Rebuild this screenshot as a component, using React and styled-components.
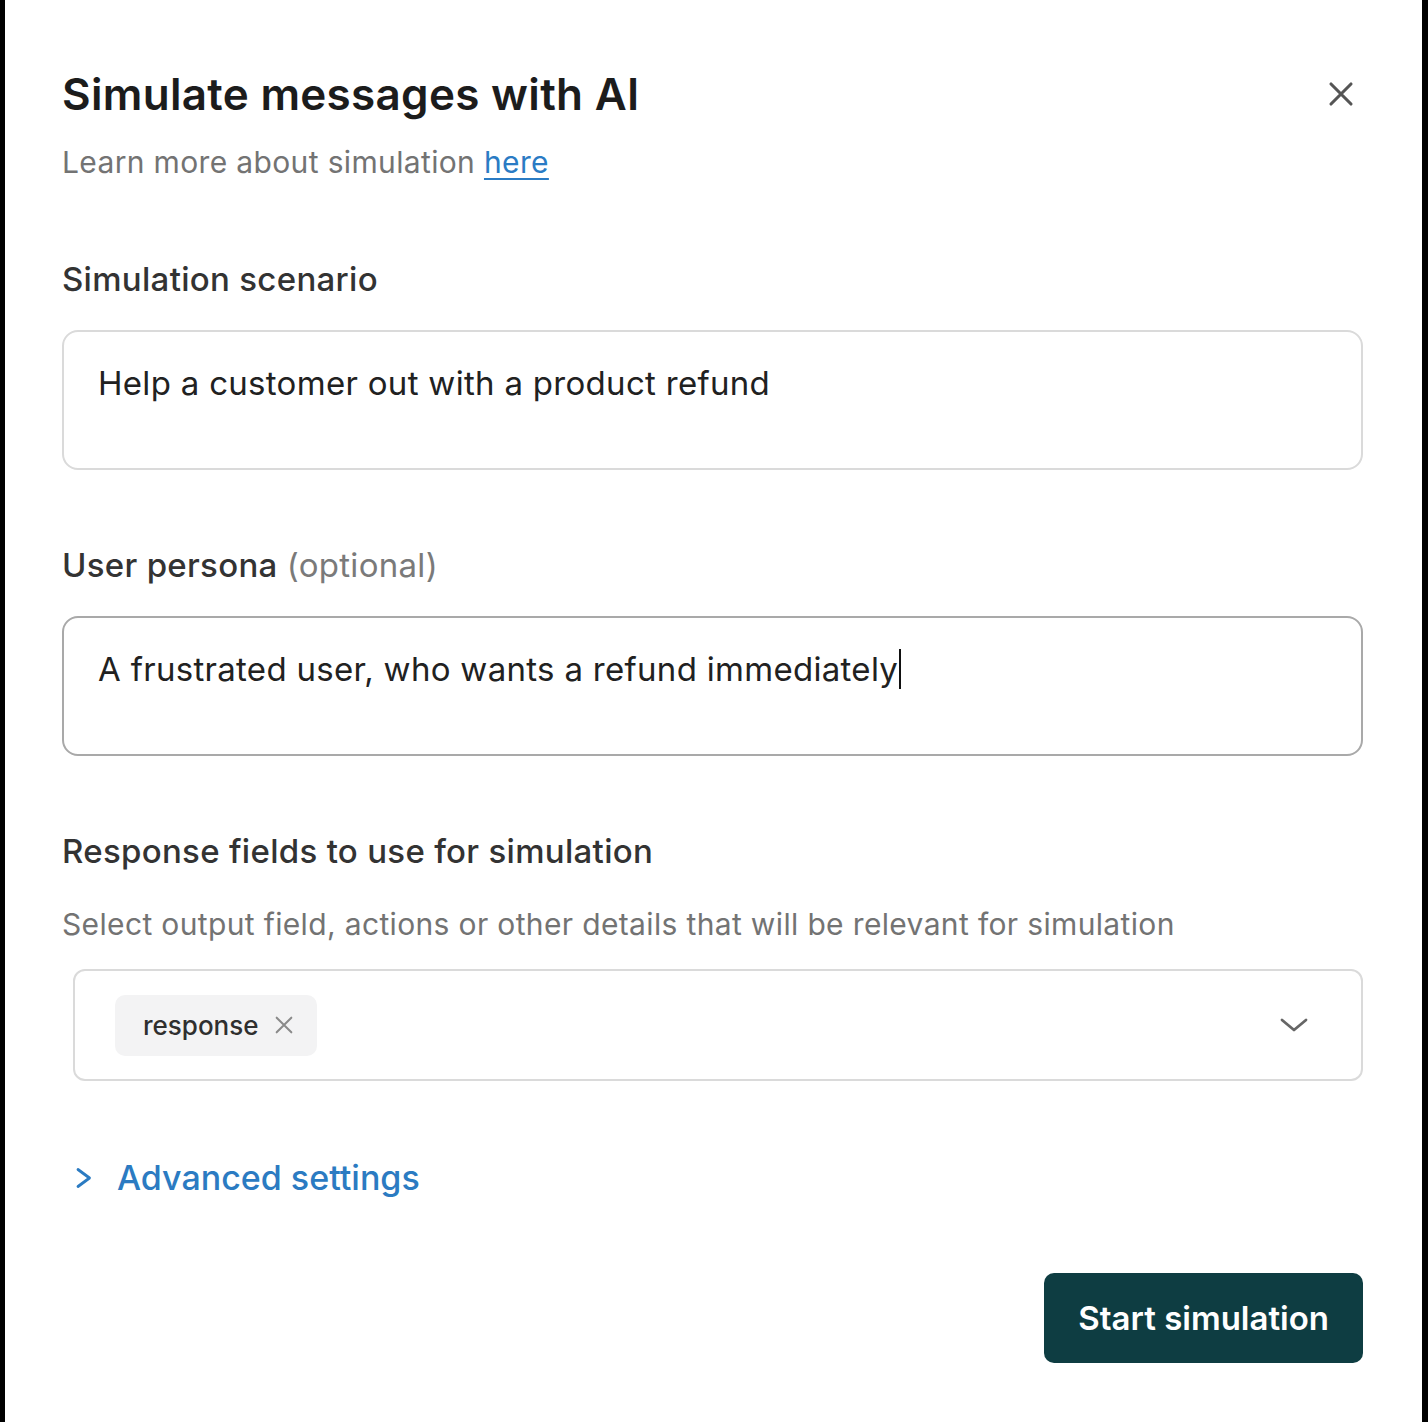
import styled, { createGlobalStyle } from "styled-components";

const GlobalStyle = createGlobalStyle`
  html, body {
    margin: 0;
    padding: 0;
    background: #000;
  }
  body {
    font-family: Inter, "Noto Sans", sans-serif;
    -webkit-font-smoothing: antialiased;
  }
`;

const Frame = styled.div`
  width: 1428px;
  height: 1422px;
  box-sizing: border-box;
  padding: 0 6px 0 5px;
  background: #000;
`;

const Modal = styled.div`
  height: 100%;
  background: #fff;
  box-sizing: border-box;
  padding: 66px 59px 0 57px;
  display: flex;
  flex-direction: column;
`;

const Header = styled.div`
  display: flex;
  justify-content: space-between;
  align-items: flex-start;
`;

const Title = styled.h1`
  margin: 0;
  font-size: 44px;
  line-height: 56px;
  font-weight: 600;
  color: #1c1c1c;
  letter-spacing: 0.3px;
`;

const CloseBtn = styled.button`
  border: none;
  background: none;
  padding: 0;
  margin-top: 13px;
  margin-right: 7px;
  width: 30px;
  height: 30px;
  display: flex;
  align-items: center;
  justify-content: center;
  cursor: pointer;
`;

const Subtitle = styled.p`
  margin: 20px 0 0;
  font-size: 30px;
  line-height: 40px;
  letter-spacing: 0.35px;
  color: #737373;
`;

const Link = styled.a`
  color: #2a7bc4;
  text-decoration: underline;
  text-underline-offset: 5px;
  text-decoration-thickness: 2px;
`;

const Section = styled.div`
  margin-top: ${(p) => p.$top}px;
  display: flex;
  flex-direction: column;
`;

const Label = styled.div`
  font-size: 33px;
  line-height: 40px;
  letter-spacing: 0.3px;
  font-weight: 500;
  color: #333;
`;

const Optional = styled.span`
  color: #7a7a7a;
  font-weight: 400;
`;

const Helper = styled.div`
  margin-top: 33px;
  font-size: 30px;
  line-height: 40px;
  letter-spacing: 0.35px;
  color: #737373;
`;

const TextBox = styled.div`
  margin-top: 31px;
  height: 140px;
  box-sizing: border-box;
  border: 2px solid ${(p) => (p.$focused ? "#a9a9a9" : "#dadada")};
  border-radius: 16px;
  padding: 31px 34px;
  font-size: 33px;
  line-height: 40px;
  letter-spacing: 0.3px;
  color: #212121;
`;

const Caret = styled.span`
  display: inline-block;
  width: 2px;
  height: 40px;
  background: #111;
  vertical-align: -8px;
  margin-left: 1px;
`;

const Select = styled.div`
  margin: 25px 0 0 11px;
  height: 112px;
  box-sizing: border-box;
  border: 2px solid #dadada;
  border-radius: 12px;
  padding: 0 52px 0 40px;
  display: flex;
  align-items: center;
  justify-content: space-between;
`;

const Chip = styled.div`
  display: flex;
  align-items: center;
  gap: 14px;
  height: 61px;
  padding: 0 22px 0 28px;
  background: #f3f3f4;
  border-radius: 10px;
  font-size: 26px;
  font-weight: 500;
  color: #2f2f2f;
`;

const Advanced = styled.div`
  margin-top: 76px;
  margin-left: 13px;
  display: flex;
  align-items: center;
  gap: 24px;
  font-size: 34px;
  font-weight: 500;
  color: #2b7bc2;
`;

const Footer = styled.div`
  margin-top: 75px;
  display: flex;
  justify-content: flex-end;
`;

const PrimaryButton = styled.button`
  height: 90px;
  padding: 0 34px;
  border: none;
  border-radius: 10px;
  background: #0e3d42;
  color: #fff;
  font-family: inherit;
  font-size: 33px;
  font-weight: 600;
`;

const XIcon = ({ size, color, stroke }) => (
  <svg width={size} height={size} viewBox="0 0 24 24" fill="none">
    <path
      d="M4 4L20 20M20 4L4 20"
      stroke={color}
      strokeWidth={stroke}
      strokeLinecap="round"
    />
  </svg>
);

const ChevronDown = () => (
  <svg width="30" height="16" viewBox="0 0 30 16" fill="none">
    <path
      d="M3 3L15 13L27 3"
      stroke="#666"
      strokeWidth="2.8"
      strokeLinecap="round"
      strokeLinejoin="round"
    />
  </svg>
);

const ChevronRight = () => (
  <svg width="18" height="22" viewBox="0 0 18 22" fill="none">
    <path
      d="M3 2.5L14.5 11L3 19.5"
      stroke="#2b7bc2"
      strokeWidth="2.8"
      strokeLinecap="round"
      strokeLinejoin="round"
    />
  </svg>
);

export default function App() {
  return (
    <Frame>
      <GlobalStyle />
      <Modal>
        <Header>
          <Title>Simulate messages with AI</Title>
          <CloseBtn>
            <XIcon size={30} color="#555" stroke={2.5} />
          </CloseBtn>
        </Header>
        <Subtitle>
          Learn more about simulation <Link href="#">here</Link>
        </Subtitle>

        <Section $top={77}>
          <Label>Simulation scenario</Label>
          <TextBox>Help a customer out with a product refund</TextBox>
        </Section>

        <Section $top={75}>
          <Label>
            User persona <Optional>(optional)</Optional>
          </Label>
          <TextBox $focused>
            A frustrated user, who wants a refund immediately
            <Caret />
          </TextBox>
        </Section>

        <Section $top={75}>
          <Label>Response fields to use for simulation</Label>
          <Helper>
            Select output field, actions or other details that will be relevant
            for simulation
          </Helper>
          <Select>
            <Chip>
              response
              <XIcon size={22} color="#8a8a8a" stroke={2.2} />
            </Chip>
            <ChevronDown />
          </Select>
        </Section>

        <Advanced>
          <ChevronRight />
          Advanced settings
        </Advanced>

        <Footer>
          <PrimaryButton>Start simulation</PrimaryButton>
        </Footer>
      </Modal>
    </Frame>
  );
}
